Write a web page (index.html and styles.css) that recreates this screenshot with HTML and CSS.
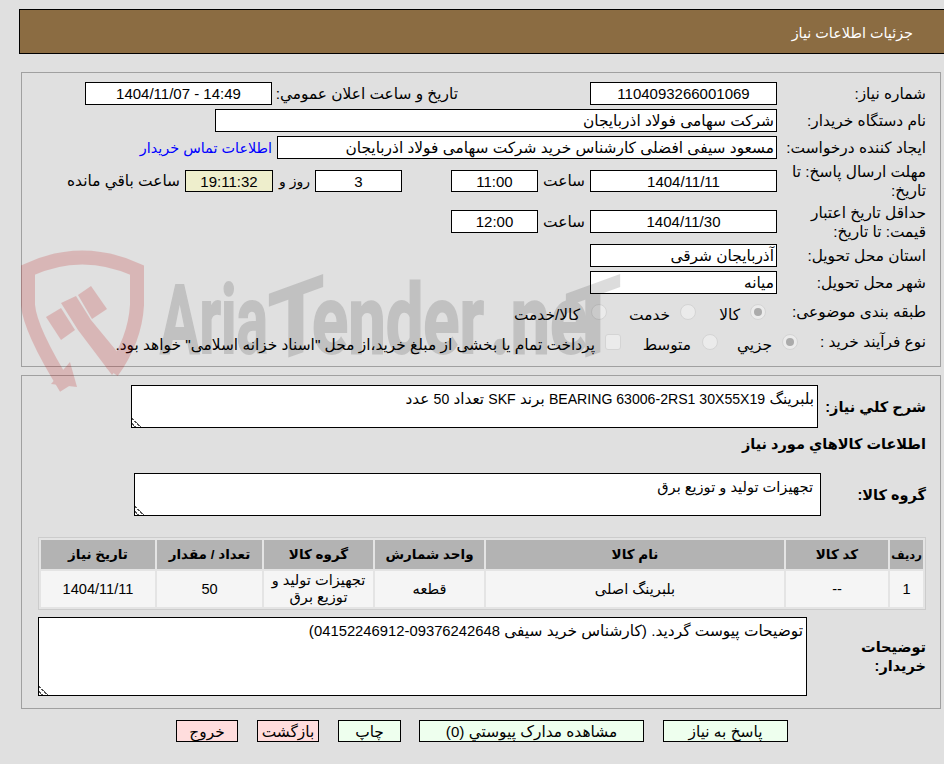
FILE: index.html
```html
<!DOCTYPE html>
<html lang="fa" dir="rtl">
<head>
<meta charset="utf-8">
<title>جزئیات اطلاعات نیاز</title>
<link rel="stylesheet" href="styles.css">
</head>
<body>
<svg class="watermark" width="640" height="340" viewBox="0 0 640 340" aria-hidden="true">
  <g class="wm-logo">
    <path class="wm-shield" d="M66 148 Q 30 90 28 65 L28 30 Q 82 5 137 30 L137 65 Q 135 100 112 132" />
    <path d="M46 77 L61 68 L75 90 L61 100 Z"/>
    <path d="M61 63 L76 56 L91 80 L124 120 L112 135 L78 90 Z"/>
    <path d="M78 55 L91 46 L107 69 L92 79 Z"/>
    <path d="M51 144 L70 122 L77 147 Z"/>
  </g>
  <g class="wm-word">
    <text class="wm-text" x="160" y="113" textLength="108" lengthAdjust="spacingAndGlyphs">Aria</text>
    <text class="wm-text" transform="translate(268 124) skewY(-20)" textLength="56" lengthAdjust="spacingAndGlyphs">T</text>
    <text class="wm-text" x="312" y="113" textLength="172" lengthAdjust="spacingAndGlyphs">ender</text>
    <text class="wm-text" x="490" y="113" textLength="98" lengthAdjust="spacingAndGlyphs">.ne</text>
    <text class="wm-text" transform="translate(565 124) skewY(-20)" textLength="56" lengthAdjust="spacingAndGlyphs">T</text>
  </g>
</svg>
<header class="page-title">جزئیات اطلاعات نیاز</header>

<section class="panel panel-form">
  <div class="row row-1">
    <div class="lbl">شماره نیاز:</div>
    <div class="box w187 center num">1104093266001069</div>
    <div class="lbl-public">تاریخ و ساعت اعلان عمومي:</div>
    <div class="box w187 center num ltr">1404/11/07 - 14:49</div>
  </div>
  <div class="row row-2">
    <div class="lbl">نام دستگاه خریدار:</div>
    <div class="box w562">شرکت سهامی فولاد اذربایجان</div>
  </div>
  <div class="row row-3">
    <div class="lbl">ایجاد کننده درخواست:</div>
    <div class="box w500">مسعود سیفی افضلی کارشناس خرید شرکت سهامی فولاد اذربایجان</div>
    <a class="contact" href="#">اطلاعات تماس خریدار</a>
  </div>
  <div class="row row-4">
    <div class="lbl two">مهلت ارسال پاسخ: تا تاریخ:</div>
    <div class="box w187 h22 center num">1404/11/11</div>
    <div class="word word-hour">ساعت</div>
    <div class="box w87 h22 center num">11:00</div>
    <div class="box w87 h22 center gap-days num">3</div>
    <div class="word word-day">روز و</div>
    <div class="box w88 h22 center timer num">19:11:32</div>
    <div class="word word-left">ساعت باقي مانده</div>
  </div>
  <div class="row row-5">
    <div class="lbl two">حداقل تاریخ اعتبار قیمت: تا تاریخ:</div>
    <div class="box w187 center num">1404/11/30</div>
    <div class="word word-hour">ساعت</div>
    <div class="box w87 center num">12:00</div>
  </div>
  <div class="row row-6">
    <div class="lbl">استان محل تحویل:</div>
    <div class="box w187">آذربایجان شرقی</div>
  </div>
  <div class="row row-7">
    <div class="lbl">شهر محل تحویل:</div>
    <div class="box w187">میانه</div>
  </div>
  <div class="row row-8">
    <div class="lbl">طبقه بندی موضوعی:</div>
    <span class="radio on r-a"></span><span class="opt o-a">کالا</span>
    <span class="radio r-b"></span><span class="opt o-b">خدمت</span>
    <span class="radio r-c"></span><span class="opt o-c">کالا/خدمت</span>
  </div>
  <div class="row row-9">
    <div class="lbl lbl-buy">نوع فرآیند خرید :</div>
    <span class="radio on"></span><span class="opt o-d">جزیي</span>
    <span class="radio r-e"></span><span class="opt o-e">متوسط</span>
    <span class="check"></span><span class="opt o-f">پرداخت تمام یا بخشی از مبلغ خرید،از محل "اسناد خزانه اسلامی" خواهد بود.</span>
  </div>
</section>

<section class="panel panel-detail">
  <div class="row need">
    <div class="lbl strong">شرح کلي نیاز:</div>
    <div class="area area-need">بلبرینگ <span class="num">BEARING 63006-2RS1 30X55X19</span> برند <span class="num">SKF</span> تعداد <span class="num">50</span> عدد</div>
  </div>
  <h2 class="goods-title">اطلاعات کالاهاي مورد نیاز</h2>
  <div class="row group">
    <div class="lbl strong group-lbl">گروه کالا:</div>
    <div class="area area-group">تجهیزات تولید و توزیع برق</div>
  </div>
  <table class="items">
    <colgroup>
      <col class="c1"><col class="c2"><col class="c3"><col class="c4"><col class="c5"><col class="c6"><col class="c7">
    </colgroup>
    <thead>
      <tr><th class="th-small">ردیف</th><th>کد کالا</th><th>نام کالا</th><th>واحد شمارش</th><th>گروه کالا</th><th>تعداد / مقدار</th><th>تاریخ نیاز</th></tr>
    </thead>
    <tbody>
      <tr><td>1</td><td>--</td><td>بلبرینگ اصلی</td><td>قطعه</td><td>تجهیزات تولید و توزیع برق</td><td>50</td><td>1404/11/11</td></tr>
    </tbody>
  </table>
  <div class="row buyer">
    <div class="lbl strong buyer-lbl">توضیحات خریدار:</div>
    <div class="area area-buyer">توضیحات پیوست گردید. (کارشناس خرید سیفی <span class="num">09376242648-04152246912</span>)</div>
  </div>
</section>

<nav class="actions">
  <button class="btn b-reply" type="button">پاسخ به نیاز</button>
  <button class="btn b-docs" type="button">مشاهده مدارک پیوستي (<span class="num">0</span>)</button>
  <button class="btn b-print" type="button">چاپ</button>
  <button class="btn pink" type="button">بازگشت</button>
  <button class="btn pink" type="button">خروج</button>
</nav>
</body>
</html>
```
FILE: styles.css
```css
* { box-sizing: border-box; }
html, body { margin: 0; padding: 0; }
body {
  position: relative;
  height: 764px;
  overflow: hidden;
  background: #e0e0e0;
  color: #000;
  font: 15.4px/18px "Liberation Sans", "DejaVu Sans", sans-serif;
}
.num { font-size: 15px; }
.ltr { direction: ltr; }
.watermark {
  position: absolute;
  left: 0;
  top: 240px;
  z-index: 2;
  pointer-events: none;
}
.wm-logo { fill: #b90000; opacity: 0.18; }
.wm-logo .wm-shield { fill: none; stroke: #b90000; stroke-width: 14; }
.wm-word { opacity: 0.134; }
.wm-text {
  font: bold 97px "Roboto", "Liberation Sans", sans-serif;
  fill: #000;
  stroke: #000;
  stroke-width: 2;
  direction: ltr;
}

.page-title {
  position: relative;
  height: 45px;
  margin: 9px 0 0 19px;
  padding: 14px 31px 0 0;
  background: #8b6c42;
  border: 1px solid #000;
  border-right: 0;
  color: #fff;
  font-size: 14.4px;
}
.panel {
  position: relative;
  z-index: 1;
  margin: 0 3px 0 21px;
  border: 1px solid #a0a0a0;
}
.panel-form { height: 295px; margin-top: 18px; padding: 9px 14px 0 0; }
.panel-detail { height: 334px; margin-top: 8px; padding: 9px 14px 0 0; }

.row { display: flex; align-items: center; }
.lbl { width: 149px; flex: none; white-space: nowrap; }
.two { line-height: 19px; white-space: normal; padding-left: 10px; }
.strong { font-weight: bold; font-size: 14.5px; }
.box {
  height: 23px;
  flex: none;
  padding: 0 2px;
  background: #fff;
  border: 1px solid #000;
  line-height: 22px;
  white-space: nowrap;
  overflow: hidden;
}
.center { text-align: center; }
.w187 { width: 187px; }
.w562 { width: 562px; }
.w500 { width: 500px; }
.w87 { width: 87px; }
.w88 { width: 88px; }
.h22 { height: 22px; line-height: 21px; }
.timer { background: #eeeecc; }
.gap-days { margin-right: 49px; }
.lbl-public { width: 181px; margin: 0 132px 0 5px; flex: none; white-space: nowrap; }
.contact { margin-right: 5px; color: #0000ff; text-decoration: none; font-size: 14.4px; white-space: nowrap; }
.word { flex: none; white-space: nowrap; }
.word-hour { width: 42px; margin: 0 5px; }
.word-day { width: 28px; margin: 0 5px 0 9px; font-size: 14px; }
.word-left { margin-right: 5px; }

.row-2 { margin-top: 4px; }
.row-3 { margin-top: 4px; }
.row-4 { margin-top: 3px; height: 38px; }
.row-5 { margin-top: 3px; height: 37px; }
.row-6 { margin-top: 4px; }
.row-7 { margin-top: 4px; }
.row-8 { margin-top: 8px; height: 20px; }
.row-9 { margin-top: 10px; height: 20px; }
.lbl-buy { width: 128px; }

.radio {
  flex: none;
  width: 16px;
  height: 16px;
  border: 1px solid #d4d4d4;
  border-radius: 50%;
  background: #ebebeb;
  position: relative;
}
.radio.on::after {
  content: "";
  position: absolute;
  inset: 3px;
  border-radius: 50%;
  background: #ababab;
}
.check {
  flex: none;
  width: 16px;
  height: 16px;
  margin-right: 25px;
  border: 1px solid #d4d4d4;
  border-radius: 3px;
  background: #ebebeb;
}
.opt { flex: none; white-space: nowrap; padding-top: 5px; margin-right: 10px; }
.r-a { margin-right: 11px; }
.o-a { width: 20px; }
.r-b { margin-right: 24px; }
.o-b { width: 40px; }
.r-c { margin-right: 23px; }
.o-c { margin-right: 11px; }
.o-d { width: 35px; }
.r-e { margin-right: 19px; }
.o-e { width: 45px; margin-right: 11px; }

.area {
  flex: none;
  padding: 4px 3px;
  background: #fff;
  border: 1px solid #000;
  resize: both;
  overflow: hidden;
}
.area .num { font-size: 14.1px; }
.area-buyer .num { font-size: 14.8px; }
.area::-webkit-resizer {
  background:
    repeating-linear-gradient(135deg, transparent 0 3px, #fff 3px 4px),
    linear-gradient(45deg,
      transparent 0 2px, #555 2px 3.5px, transparent 3.5px 5px,
      #555 5px 6.5px, transparent 6.5px);
}
.need .lbl { width: 108px; }
.area-need { width: 687px; height: 43px; font-size: 15.2px; }
.goods-title { margin: 7px 0 0; font-size: 14.5px; line-height: 18px; font-weight: bold; }
.group { margin-top: 20px; }
.group-lbl { width: 105px; }
.area-group { width: 687px; height: 43px; padding-right: 7px; font-size: 14.6px; }
.items {
  width: 888px;
  height: 73px;
  margin-top: 21px;
  border: 1px solid #cccccc;
  border-collapse: separate;
  border-spacing: 2px;
  background: #e4e4e4;
  table-layout: fixed;
  text-align: center;
}
.items th { height: 29px; padding: 0; background: #b3b3b3; font-size: 13.5px; }
.items th.th-small { font-size: 11.5px; }
.items td { height: 36px; padding: 0 4px; background: #f5f5f5; font-size: 14.6px; line-height: 17px; }
.c1 { width: 33px; } .c2 { width: 102px; } .c3 { width: 298px; } .c4 { width: 109px; }
.c5 { width: 109px; } .c6 { width: 105px; } .c7 { width: 114px; }
.buyer { margin-top: 7px; }
.buyer-lbl { width: 119px; line-height: 19px; white-space: normal; padding-left: 30px; }
.area-buyer { width: 769px; height: 79px; }

.actions { display: flex; position: relative; z-index: 1; margin: 11px 156px 0 0; gap: 19px; }
.btn {
  height: 22px;
  padding: 2px 0 0;
  background: #eeffee;
  border: 1px solid #000;
  border-radius: 0;
  font: inherit;
  line-height: 18px;
  color: #000;
}
.b-reply { width: 125px; }
.b-docs { width: 225px; }
.b-print { width: 63px; margin-right: -1px; }
.pink { width: 62px; background: #ffdddd; }
```
